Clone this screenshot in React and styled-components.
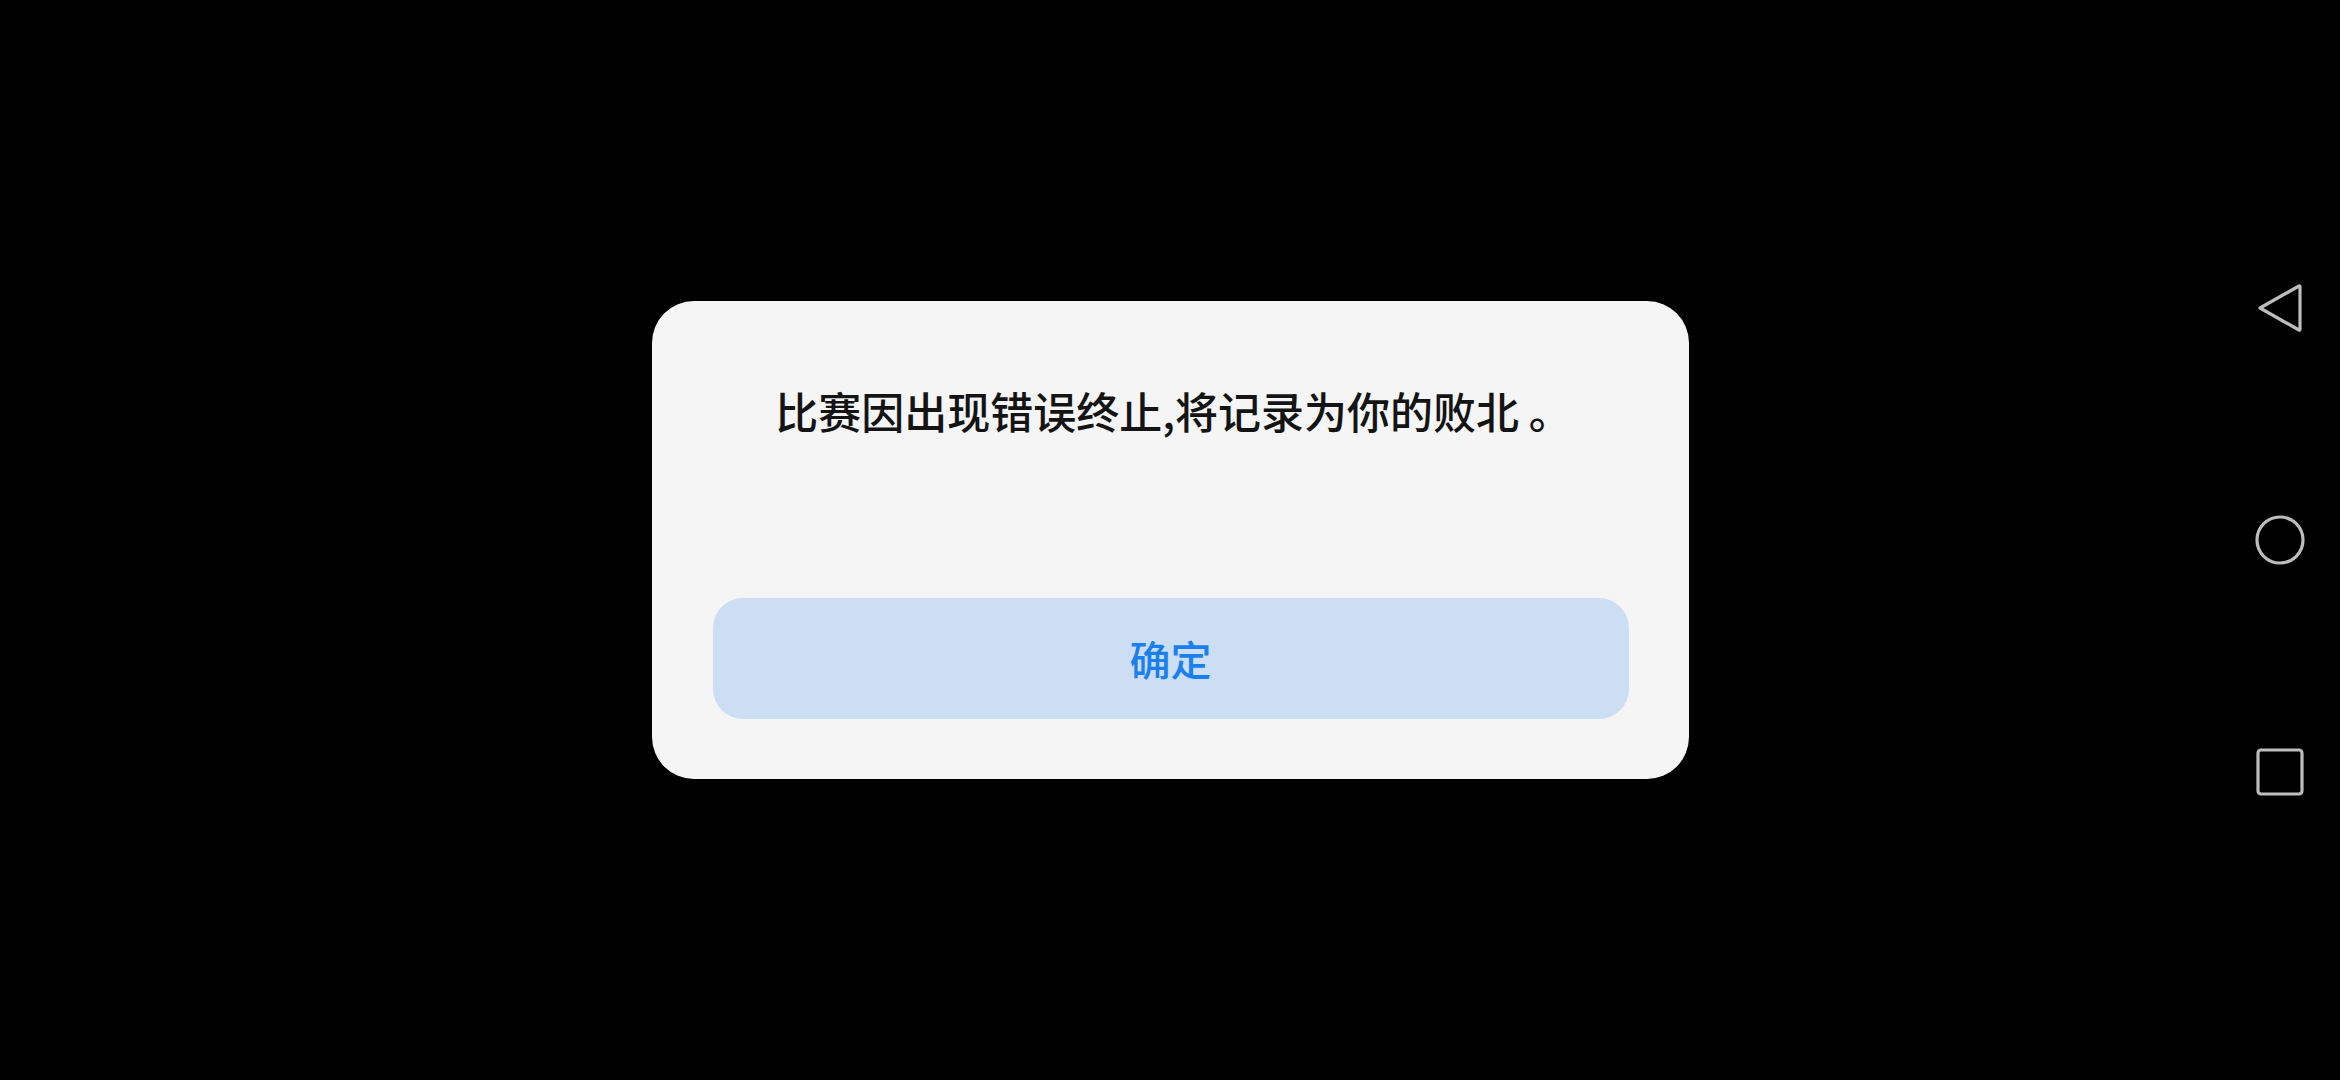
import React from "react";
import styled, { createGlobalStyle } from "styled-components";

const GlobalStyle = createGlobalStyle`
  html, body {
    margin: 0;
    padding: 0;
    background: #000;
  }
  body {
    font-family: "Noto Sans CJK SC", "Noto Sans", sans-serif;
  }
`;

const Screen = styled.div`
  width: 2340px;
  height: 1080px;
  background: #000;
  display: grid;
  grid-template-columns: 120px 1fr 120px;
  overflow: hidden;
`;

const Stage = styled.main`
  grid-column: 1 / 4;
  grid-row: 1;
  display: flex;
  align-items: center;
  justify-content: center;
`;

const Dialog = styled.div`
  width: 1037px;
  height: 478px;
  box-sizing: border-box;
  background: #f5f5f5;
  border-radius: 42px;
  padding: 79px 60px 60px 61px;
  display: flex;
  flex-direction: column;
`;

const Message = styled.p`
  margin: 0 0 0 6px;
  font-size: 43px;
  line-height: 60px;
  font-weight: 500;
  color: #141414;
  text-align: center;
  white-space: nowrap;
`;

const ConfirmButton = styled.button`
  margin-top: auto;
  height: 121px;
  width: 100%;
  border: none;
  border-radius: 30px;
  background: #cbdef3;
  color: #1a7ff0;
  font-family: "Noto Sans CJK SC", "Noto Sans", sans-serif;
  font-size: 41px;
  font-weight: 500;
  padding: 0 0 2px;
  cursor: pointer;
`;

const NavBar = styled.nav`
  grid-column: 3;
  grid-row: 1;
  display: flex;
  flex-direction: column;
  align-items: center;
  justify-content: center;
  gap: 182px;
  z-index: 1;
`;

const NavIcon = styled.svg`
  width: 50px;
  height: 50px;
  display: block;
`;

const stroke = {
  fill: "none",
  stroke: "#bdbdbd",
  strokeWidth: 3.2,
  strokeLinejoin: "round",
};

const App = () => (
  <>
    <GlobalStyle />
    <Screen>
      <Stage>
        <Dialog>
          <Message>比赛因出现错误终止,将记录为你的败北 。</Message>
          <ConfirmButton>确定</ConfirmButton>
        </Dialog>
      </Stage>
      <NavBar>
        <NavIcon viewBox="0 0 50 50">
          <path d="M5 25 L44 3 Q45 2.5 45 4 L45 46 Q45 47.5 44 47 Z" {...stroke} />
        </NavIcon>
        <NavIcon viewBox="0 0 50 50">
          <circle cx="25" cy="25" r="23" {...stroke} />
        </NavIcon>
        <NavIcon viewBox="0 0 50 50">
          <rect x="3" y="3" width="44" height="44" rx="3" {...stroke} />
        </NavIcon>
      </NavBar>
    </Screen>
  </>
);

export default App;
